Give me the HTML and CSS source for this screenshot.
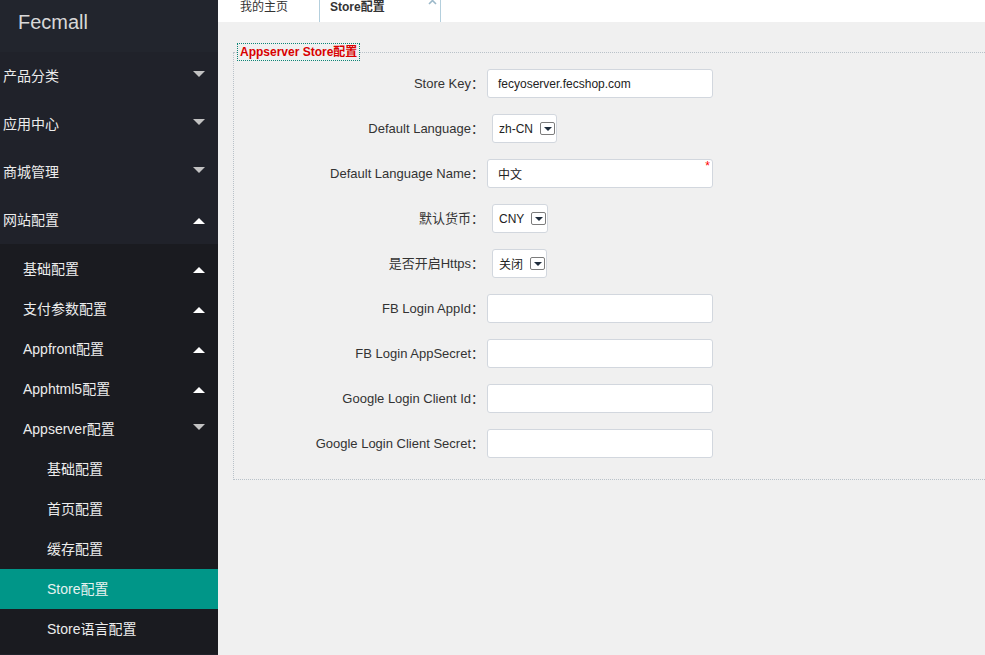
FILE: index.html
```html
<!DOCTYPE html>
<html lang="zh-CN">
<head>
<meta charset="utf-8">
<title>Store配置 - Fecmall</title>
<link rel="stylesheet" href="styles.css">
</head>
<body>
<div class="app">
  <aside class="side">
    <div class="logo">Fecmall</div>
    <ul class="nav">
      <li><a class="lnk l1">产品分类<span class="arr down"></span></a></li>
      <li><a class="lnk l1">应用中心<span class="arr down"></span></a></li>
      <li><a class="lnk l1">商城管理<span class="arr down"></span></a></li>
      <li><a class="lnk l1">网站配置<span class="arr up"></span></a>
        <ul class="child">
          <li><a class="lnk l2">基础配置<span class="arr up"></span></a></li>
          <li><a class="lnk l2">支付参数配置<span class="arr up"></span></a></li>
          <li><a class="lnk l2">Appfront配置<span class="arr up"></span></a></li>
          <li><a class="lnk l2">Apphtml5配置<span class="arr up"></span></a></li>
          <li><a class="lnk l2">Appserver配置<span class="arr down"></span></a>
            <ul class="child2">
              <li><a class="lnk l3">基础配置</a></li>
              <li><a class="lnk l3">首页配置</a></li>
              <li><a class="lnk l3">缓存配置</a></li>
              <li><a class="lnk l3 active">Store配置</a></li>
              <li><a class="lnk l3">Store语言配置</a></li>
            </ul>
          </li>
        </ul>
      </li>
    </ul>
  </aside>
  <main class="main">
    <div class="tabs">
      <div class="tab home">我的主页</div>
      <div class="tab cur">Store配置
        <svg class="close" width="9" height="6" viewBox="0 0 9 6"><path d="M1 5 L4.5 1.5 L8 5" fill="none" stroke="#9bb8c9" stroke-width="1.6"/></svg>
      </div>
    </div>
    <div class="content">
      <fieldset class="box">
        <legend>Appserver Store配置</legend>
        <div class="form">
          <div class="row"><label class="lab">Store Key：</label><div class="inp">fecyoserver.fecshop.com</div></div>
          <div class="row"><label class="lab">Default Language：</label><div class="sel"><span>zh-CN</span><i class="btn"></i></div></div>
          <div class="row"><label class="lab">Default Language Name：</label><div class="inp">中文<span class="req">*</span></div></div>
          <div class="row"><label class="lab">默认货币：</label><div class="sel"><span>CNY</span><i class="btn"></i></div></div>
          <div class="row"><label class="lab">是否开启Https：</label><div class="sel"><span>关闭</span><i class="btn"></i></div></div>
          <div class="row"><label class="lab">FB Login AppId：</label><div class="inp"></div></div>
          <div class="row"><label class="lab">FB Login AppSecret：</label><div class="inp"></div></div>
          <div class="row"><label class="lab">Google Login Client Id：</label><div class="inp"></div></div>
          <div class="row"><label class="lab">Google Login Client Secret：</label><div class="inp"></div></div>
        </div>
      </fieldset>
    </div>
  </main>
</div>
</body>
</html>
```

FILE: styles.css
```css
* { box-sizing: border-box; }
html, body { margin: 0; padding: 0; height: 100%; overflow: hidden; }
body {
  font-family: "Liberation Sans", Arial, "Noto Sans CJK SC", sans-serif;
  font-size: 12px;
  color: #333;
  background: #f0f0f0;
}
ul { list-style: none; margin: 0; padding: 0; }
.app { display: flex; height: 100%; }

/* sidebar */
.side {
  width: 218px;
  flex: none;
  background: #20222a;
  height: 100%;
  overflow: hidden;
}
.logo {
  height: 52px;
  padding-left: 18px;
  display: flex;
  align-items: center;
  font-size: 20px;
  color: #d8d8d8;
  background: #22252d;
  padding-bottom: 8px;
}
.lnk {
  display: flex;
  align-items: center;
  justify-content: space-between;
  font-size: 14px;
  color: #ececec;
  padding-right: 13px;
  padding-bottom: 2px;
  white-space: nowrap;
}
.l1 { height: 48px; padding-left: 3px; }
.l2 { height: 40px; padding-left: 23px; }
.l3 { height: 40px; padding-left: 47px; }
.l3.active { background: #009688; color: #e6f2f0; }
.child { background: #1a1b20; padding: 5px 0; }
.arr { width: 0; height: 0; border-left: 6px solid transparent; border-right: 6px solid transparent; }
.arr.down { border-top: 6px solid #c2c2c2; margin-top: -2px; }
.arr.up { border-bottom: 6px solid #fff; margin-top: 3px; }

/* main */
.main { flex: 1; min-width: 0; overflow: hidden; }
.tabs { height: 22px; background: #fff; display: flex; }
.tab { height: 22px; line-height: 15px; font-size: 12px; color: #333; position: relative; }
.tab.home { width: 101px; padding-left: 22px; }
.tab.cur {
  width: 122px;
  padding-left: 10px;
  font-weight: bold;
  border-left: 1px solid #b4cfdd;
  border-right: 1px solid #b4cfdd;
}
.close { position: absolute; right: 3px; top: -1px; }

.content { padding: 22px 0 0 15px; margin-right: -30px; }
.box {
  margin: 0;
  padding: 0 0 21px 0;
  border: 1px dotted #b9c2c9;
  min-width: 0;
}
.box legend {
  margin-left: 4px;
  padding: 0 2px;
  line-height: 16px;
  font-size: 12px;
  font-weight: bold;
  color: #d90000;
  outline: 1px dotted #0d8577;
}
.form { padding-top: 9px; display: flex; flex-direction: column; gap: 16px; }
.row { display: flex; align-items: center; height: 29px; }
.lab {
  width: 250px;
  text-align: right;
  font-size: 13px;
  color: #333;
  flex: none;
  padding-bottom: 2px;
}
.inp {
  margin-left: 3px;
  width: 226px;
  height: 29px;
  background: #fff;
  border: 1px solid #d2d7de;
  border-radius: 3px;
  padding-left: 10px;
  display: flex;
  align-items: center;
  font-size: 12px;
  color: #222;
  position: relative;
}
.req {
  position: absolute;
  right: 2px;
  top: 0;
  color: #f00;
  font-size: 12px;
  line-height: 12px;
}
.sel {
  margin-left: 8px;
  height: 29px;
  background: #fff;
  border: 1px solid #d2d7de;
  border-radius: 3px;
  padding: 0 1px 0 6px;
  display: flex;
  align-items: center;
  gap: 7px;
  font-size: 12px;
  color: #222;
}
.btn {
  display: block;
  width: 15px;
  height: 13px;
  border: 1px solid #7c7c7c;
  border-radius: 2px;
  background: #fff;
  position: relative;
}
.btn::after {
  content: "";
  position: absolute;
  left: 3px;
  top: 4px;
  border-left: 4px solid transparent;
  border-right: 4px solid transparent;
  border-top: 4px solid #1f2d3d;
}
```
